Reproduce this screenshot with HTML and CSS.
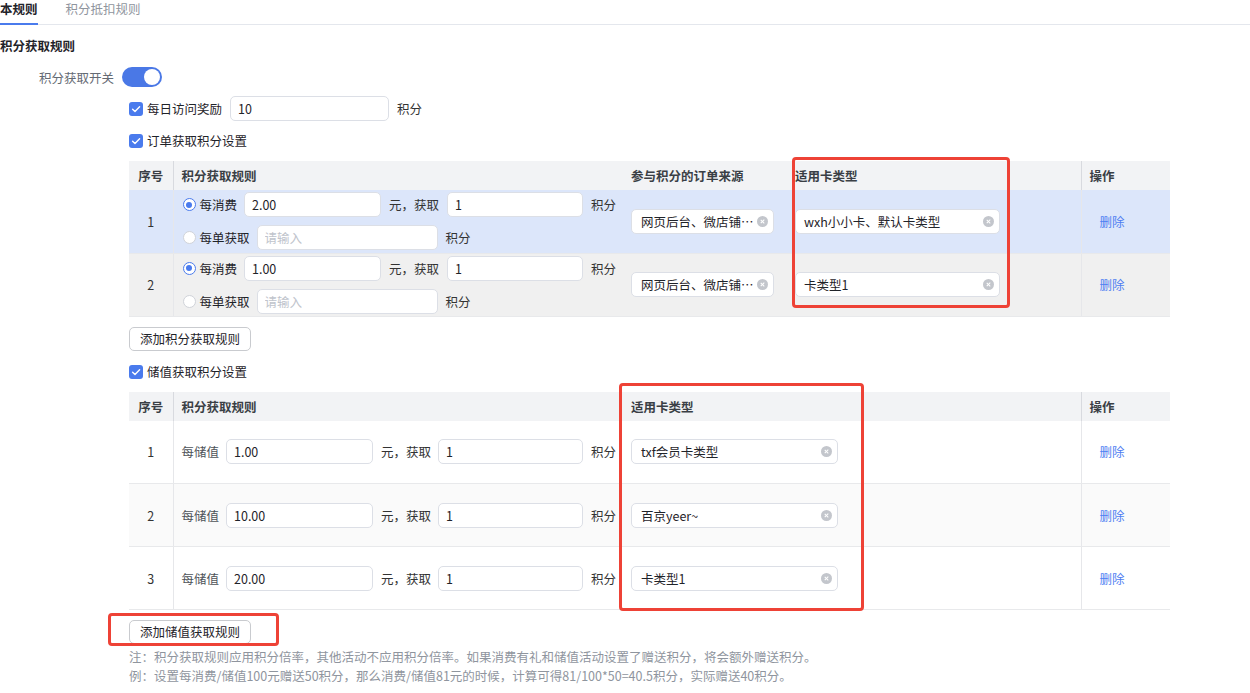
FILE: index.html
```html
<!DOCTYPE html>
<html lang="zh-CN">
<head>
<meta charset="utf-8">
<title>积分规则</title>
<link rel="stylesheet" href="styles.css">
</head>
<body>
<div class="page">
  <div class="tabs">
    <div class="tab active">本规则</div>
    <div class="tab">积分抵扣规则</div>
  </div>

  <div class="section-title">积分获取规则</div>

  <div class="switch-row">
    <span class="form-label">积分获取开关</span>
    <span class="switch"><span class="knob"></span></span>
  </div>

  <div class="block">
    <div class="check-row daily">
      <span class="checkbox"><svg viewBox="0 0 14 14" width="14" height="14"><rect width="14" height="14" rx="3" fill="#4a7bed"/><path d="M3.6 7.2 L6 9.5 L10.6 4.7" fill="none" stroke="#fff" stroke-width="1.4" stroke-linecap="round" stroke-linejoin="round"/></svg></span>
      <span class="check-text">每日访问奖励</span>
      <input class="inp w159" value="10">
      <span class="txt">积分</span>
    </div>

    <div class="check-row">
      <span class="checkbox"><svg viewBox="0 0 14 14" width="14" height="14"><rect width="14" height="14" rx="3" fill="#4a7bed"/><path d="M3.6 7.2 L6 9.5 L10.6 4.7" fill="none" stroke="#fff" stroke-width="1.4" stroke-linecap="round" stroke-linejoin="round"/></svg></span>
      <span class="check-text">订单获取积分设置</span>
    </div>

    <table class="grid">
      <colgroup><col class="c-no"><col class="c-rule"><col class="c-src"><col class="c-card1"><col class="c-op"></colgroup>
      <thead>
        <tr><th class="no">序号</th><th class="rule">积分获取规则</th><th class="pad10">参与积分的订单来源</th><th>适用卡类型</th><th class="op">操作</th></tr>
      </thead>
      <tbody>
        <tr class="row-hl">
          <td class="no">1</td>
          <td class="rule">
            <div class="line">
              <span class="radio on"></span><span class="lbl">每消费</span>
              <input class="inp w137" value="2.00"><span class="txt">元，获取</span>
              <input class="inp w136" value="1"><span class="txt">积分</span>
            </div>
            <div class="line">
              <span class="radio"></span><span class="lbl">每单获取</span>
              <input class="inp w181" placeholder="请输入"><span class="txt">积分</span>
            </div>
          </td>
          <td class="pad10"><div class="sel w143"><span class="sel-text">网页后台、微店铺…</span><span class="clear"></span></div></td>
          <td><div class="sel w204"><span class="sel-text">wxh小小卡、默认卡类型</span><span class="clear"></span></div></td>
          <td class="op"><span class="link">删除</span></td>
        </tr>
        <tr class="row-gray">
          <td class="no">2</td>
          <td class="rule">
            <div class="line">
              <span class="radio on"></span><span class="lbl">每消费</span>
              <input class="inp w137" value="1.00"><span class="txt">元，获取</span>
              <input class="inp w136" value="1"><span class="txt">积分</span>
            </div>
            <div class="line">
              <span class="radio"></span><span class="lbl">每单获取</span>
              <input class="inp w181" placeholder="请输入"><span class="txt">积分</span>
            </div>
          </td>
          <td class="pad10"><div class="sel w143"><span class="sel-text">网页后台、微店铺…</span><span class="clear"></span></div></td>
          <td><div class="sel w204"><span class="sel-text">卡类型1</span><span class="clear"></span></div></td>
          <td class="op"><span class="link">删除</span></td>
        </tr>
      </tbody>
    </table>

    <button class="btn">添加积分获取规则</button>

    <div class="check-row store">
      <span class="checkbox"><svg viewBox="0 0 14 14" width="14" height="14"><rect width="14" height="14" rx="3" fill="#4a7bed"/><path d="M3.6 7.2 L6 9.5 L10.6 4.7" fill="none" stroke="#fff" stroke-width="1.4" stroke-linecap="round" stroke-linejoin="round"/></svg></span>
      <span class="check-text">储值获取积分设置</span>
    </div>

    <table class="grid">
      <colgroup><col class="c-no"><col class="c-rule"><col class="c-card2"><col class="c-op"></colgroup>
      <thead>
        <tr><th class="no">序号</th><th class="rule">积分获取规则</th><th class="pad10">适用卡类型</th><th class="op">操作</th></tr>
      </thead>
      <tbody>
        <tr>
          <td class="no">1</td>
          <td class="rule r2">
            <div class="line"><span class="lbl gray">每储值</span><input class="inp w147" value="1.00"><span class="txt">元，获取</span><input class="inp w145 l7" value="1"><span class="txt">积分</span></div>
          </td>
          <td class="pad10"><div class="sel w207"><span class="sel-text">txf会员卡类型</span><span class="clear"></span></div></td>
          <td class="op"><span class="link">删除</span></td>
        </tr>
        <tr class="row-stripe">
          <td class="no">2</td>
          <td class="rule r2">
            <div class="line"><span class="lbl gray">每储值</span><input class="inp w147" value="10.00"><span class="txt">元，获取</span><input class="inp w145 l7" value="1"><span class="txt">积分</span></div>
          </td>
          <td class="pad10"><div class="sel w207"><span class="sel-text">百京yeer~</span><span class="clear"></span></div></td>
          <td class="op"><span class="link">删除</span></td>
        </tr>
        <tr>
          <td class="no">3</td>
          <td class="rule r2">
            <div class="line"><span class="lbl gray">每储值</span><input class="inp w147" value="20.00"><span class="txt">元，获取</span><input class="inp w145 l7" value="1"><span class="txt">积分</span></div>
          </td>
          <td class="pad10"><div class="sel w207"><span class="sel-text">卡类型1</span><span class="clear"></span></div></td>
          <td class="op"><span class="link">删除</span></td>
        </tr>
      </tbody>
    </table>

    <button class="btn">添加储值获取规则</button>

    <p class="note">注：积分获取规则应用积分倍率，其他活动不应用积分倍率。如果消费有礼和储值活动设置了赠送积分，将会额外赠送积分。</p>
    <p class="note">例：设置每消费/储值100元赠送50积分，那么消费/储值81元的时候，计算可得81/100*50=40.5积分，实际赠送40积分。</p>
  </div>

  <div class="mark mark1"></div>
  <div class="mark mark2"></div>
  <div class="mark mark3"></div>
</div>
</body>
</html>
```

FILE: styles.css
```css
* { box-sizing: border-box; }
html, body { margin: 0; padding: 0; background: #fff; }
body {
  font-family: "Noto Sans CJK SC", "Noto Sans", sans-serif;
  font-size: 12.5px;
  color: #1f2329;
  overflow: hidden;
}
.page { position: relative; width: 1250px; height: 693px; overflow: hidden; }

/* tabs */
.tabs {
  display: flex;
  gap: 28px;
  height: 25px;
  border-bottom: 1px solid #e4e7ed;
}
.tab {
  height: 25px;
  line-height: 18px;
  color: #8f959e;
  border-bottom: 2px solid transparent;
  margin-bottom: -1px;
}
.tab.active {
  color: #1f2329;
  font-weight: 700;
  border-bottom-color: #4a7bed;
}

.section-title {
  margin-top: 12px;
  line-height: 18px;
  font-weight: 700;
  color: #1f2329;
}

.switch-row {
  display: flex;
  align-items: center;
  margin-top: 12px;
  height: 20px;
}
.form-label {
  width: 114px;
  text-align: right;
  color: #646a73;
  margin-right: 8px;
}
.switch {
  width: 40px;
  height: 20px;
  border-radius: 10px;
  background: #4a78e6;
  position: relative;
  display: inline-block;
}
.knob {
  position: absolute;
  right: 2px;
  top: 2px;
  width: 16px;
  height: 16px;
  border-radius: 50%;
  background: #fff;
}

.block { padding-left: 129px; }

.check-row {
  display: flex;
  align-items: center;
  line-height: 18px;
  height: 18px;
  margin-top: 11px;
}
.check-row.daily { height: 25px; margin-top: 9px; }
.check-row.store { margin-top: 12px; }
.checkbox { width: 14px; height: 14px; display: inline-flex; margin-right: 4px; }
.check-text { color: #1f2329; margin-right: 8px; }

.inp {
  height: 25px;
  border: 1px solid #dcdfe6;
  border-radius: 5px;
  background: #fff;
  font-family: "Noto Sans CJK SC", "Noto Sans", sans-serif;
  font-size: 12.5px;
  color: #1f2329;
  padding: 0 7px;
  outline: none;
  margin: 0;
}
.inp::placeholder { color: #c0c4cc; }
.w159 { width: 159px; }
.w137 { width: 137px; }
.w136 { width: 136px; }
.w181 { width: 181px; }
.w147 { width: 147px; }
.w145 { width: 145px; }
.txt { margin: 0 8px; color: #333; white-space: nowrap; }

/* tables */
.grid {
  width: 1041px;
  table-layout: fixed;
  border-collapse: collapse;
  margin-top: 11px;
}
.c-no { width: 44px; }
.c-rule { width: 448px; }
.c-src { width: 166px; }
.c-card1 { width: 294px; }
.c-card2 { width: 460px; }
.c-op { width: 89px; }

.grid th {
  height: 29px;
  background: #f2f3f5;
  text-align: left;
  font-weight: 700;
  color: #3a3f45;
  padding: 0 8px;
  white-space: nowrap;
}
.grid th.no { text-align: center; padding: 0; border-right: 1px solid #d8dadf; }
.grid th.op { border-left: 1px solid #d8dadf; }
.grid td {
  height: 63px;
  padding: 0 8px;
  border-bottom: 1px solid #e8e9eb;
  vertical-align: middle;
}
.grid td.no { text-align: center; padding: 0; color: #333; border-right: 1px solid #e6e7ea; }
.grid td.op { border-left: 1px solid #e6e7ea; padding-left: 18px; }
.grid .pad10 { padding-left: 10px; }
.grid td.rule { padding-left: 9px; }
.grid td.rule.r2 { padding-left: 8px; }

.row-hl td { background: #dce6fa; }
.row-gray td { background: #f0f0f0; }
.row-stripe td { background: #fafafa; }

.line { display: flex; align-items: center; height: 25px; }
.line + .line { margin-top: 8px; }
.radio {
  width: 13px;
  height: 13px;
  border-radius: 50%;
  border: 1px solid #d0d3d9;
  background: #fff;
  margin-right: 4px;
  position: relative;
  flex: none;
}
.radio.on { border-color: #4a7bed; }
.radio.on::after {
  content: "";
  position: absolute;
  left: 2.5px;
  top: 2.5px;
  width: 6px;
  height: 6px;
  border-radius: 50%;
  background: #4a7bed;
}
.lbl { margin-right: 7px; color: #1f2329; white-space: nowrap; }
.lbl.gray { color: #4e5358; margin-right: 7px; }
.l7 { margin-left: -1px; }

.sel {
  display: flex;
  align-items: center;
  height: 25px;
  border: 1px solid #dcdfe6;
  border-radius: 5px;
  background: #fff;
  padding: 0 5px 0 9px;
}
.w143 { width: 143px; }
.w204 { width: 205px; padding-left: 8px; }
.w207 { width: 207px; }
.sel-text {
  flex: 1;
  min-width: 0;
  white-space: nowrap;
  color: #1f2329;
}
.clear {
  width: 11px;
  height: 11px;
  border-radius: 50%;
  background: #c3c6cc;
  margin-left: 3px;
  flex: none;
  position: relative;
}
.clear::before, .clear::after {
  content: "";
  position: absolute;
  left: 5px;
  top: 3px;
  width: 1.2px;
  height: 5px;
  background: #fff;
  transform: rotate(45deg);
}
.clear::after { transform: rotate(-45deg); }

.link { color: #4e7ef2; cursor: pointer; }

.btn {
  display: block;
  margin-top: 10px;
  height: 24px;
  padding: 0 10px;
  border: 1px solid #c9cbcf;
  border-radius: 5px;
  background: #fff;
  font-family: "Noto Sans CJK SC", "Noto Sans", sans-serif;
  font-size: 12.5px;
  color: #1f2329;
  line-height: 22px;
}

.note {
  margin: 0;
  line-height: 19px;
  color: #8f959e;
  white-space: nowrap;
}
.btn + .note { margin-top: 3px; }

/* red annotation boxes */
.mark {
  position: absolute;
  border: 3px solid #ee4236;
  border-radius: 4px;
  pointer-events: none;
}
.mark1 { left: 792px; top: 157px; width: 218px; height: 151px; }
.mark2 { left: 619px; top: 383px; width: 245px; height: 228px; }
.mark3 { left: 108px; top: 613px; width: 171px; height: 33px; }
```
